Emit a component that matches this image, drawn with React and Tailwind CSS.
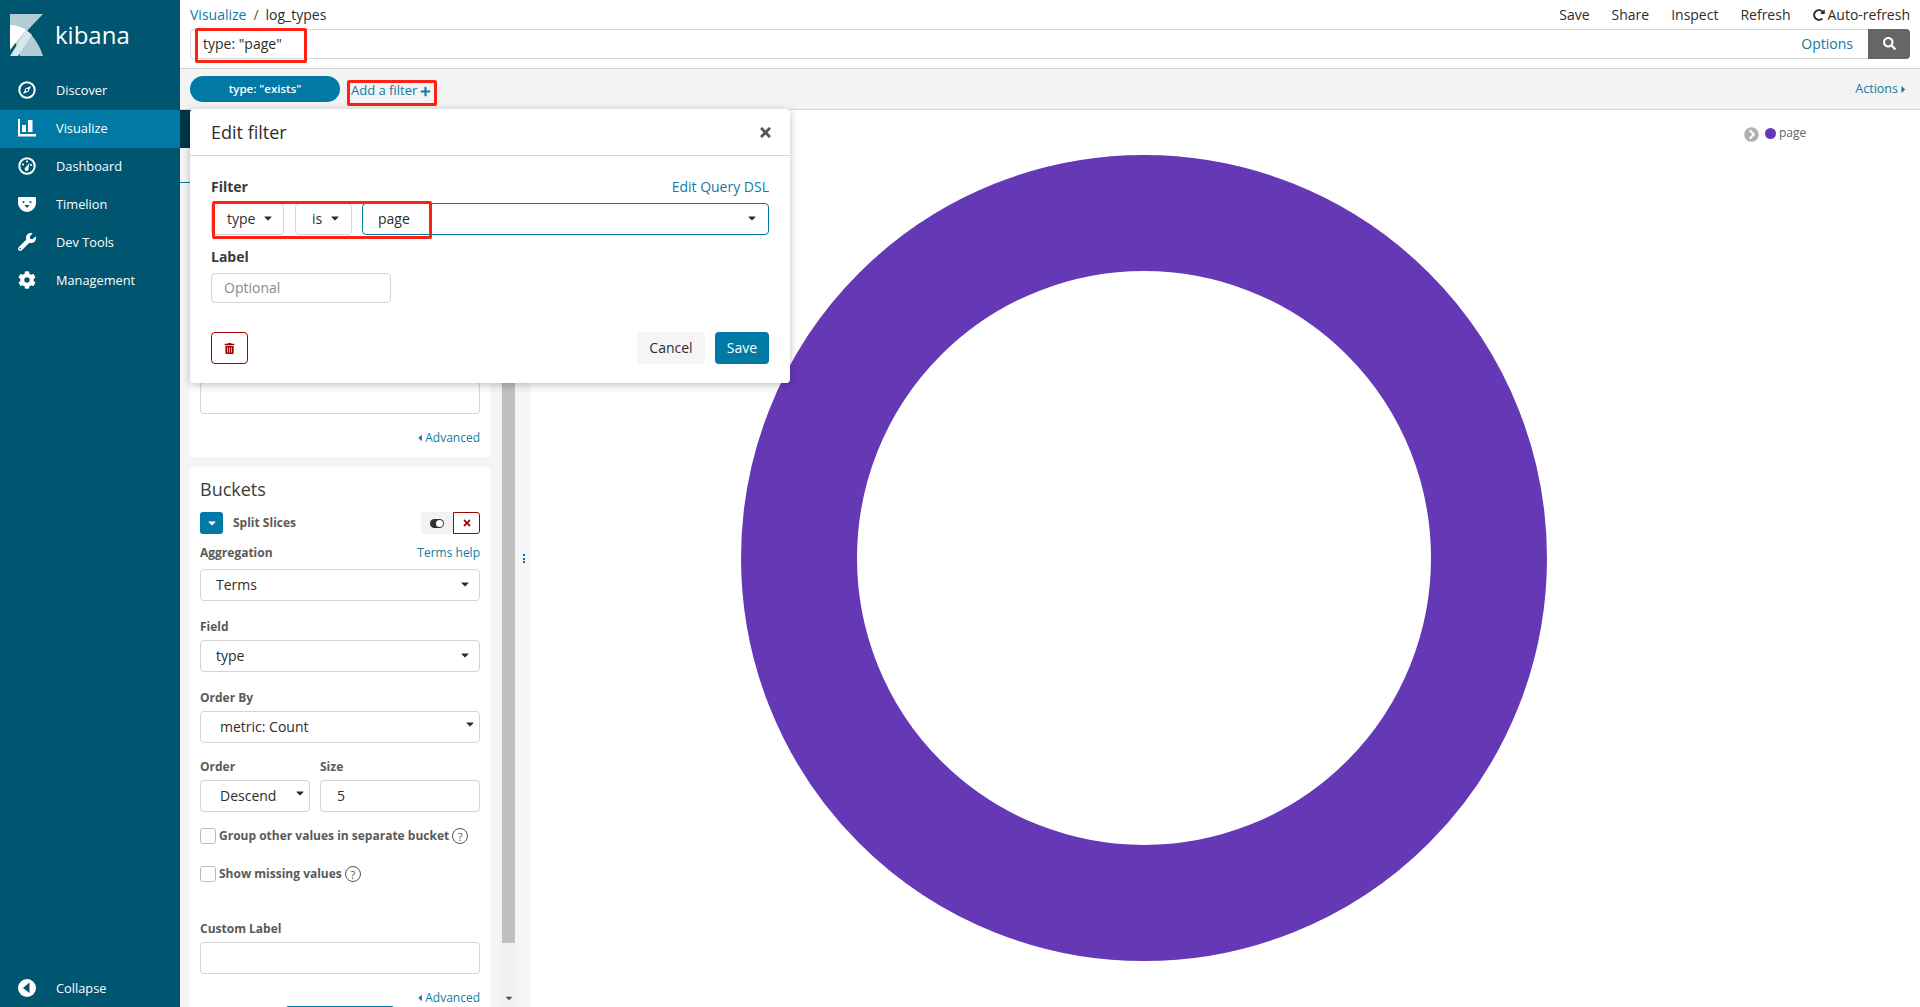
import React from 'react';
import { FaWrench, FaCog, FaSearch, FaPlus, FaTrashAlt, FaTimes, FaRedoAlt, FaChevronCircleRight, FaCaretDown, FaCaretLeft, FaCaretRight } from 'react-icons/fa';

const font = { fontFamily: '"Open Sans", sans-serif' };

const KibanaLogo = () => (
    <svg width="33" height="42" viewBox="0 0 33 42" className="block">
        <polygon points="0,0 33,0 15,19 0,11" fill="#b3cdd4" />
        <path d="M0 11 C12 11 25 19 33 42 L10 42 Z" fill="#b3cdd4" />
        <path d="M0 11 C6 11 12 13 16 16 L0 36 Z" fill="#ffffff" />
        <path d="M16 16 C18 17 20 19 22 21 L8 42 L0 42 Z" fill="#d9e6ea" />
    </svg>
);

const CompassIcon = () => (
    <svg width="18" height="18" viewBox="0 0 18 18">
        <circle cx="9" cy="9" r="7.7" fill="none" stroke="#fff" strokeWidth="2" />
        <path d="M13 5 L10.6 10.6 L5 13 L7.4 7.4 Z" fill="#fff" />
        <circle cx="9" cy="9" r="1.2" fill="#005571" />
    </svg>
);

const BarsIcon = () => (
    <svg width="18" height="18" viewBox="0 0 18 18">
        <path d="M0 0 H2 V15 H18 V17.5 H0 Z" fill="#fff" />
        <rect x="4" y="6" width="4" height="7" fill="#fff" />
        <rect x="10" y="1" width="4.5" height="12" fill="#fff" />
    </svg>
);

const GaugeIcon = () => (
    <svg width="18" height="18" viewBox="0 0 18 18">
        <circle cx="9" cy="9" r="7.7" fill="none" stroke="#fff" strokeWidth="2" />
        <circle cx="9" cy="4.5" r="1.1" fill="#fff" />
        <circle cx="13" cy="8" r="1.1" fill="#fff" />
        <circle cx="5" cy="7.5" r="1.1" fill="#fff" />
        <path d="M11.5 6 L10.5 11 A2 2 0 1 1 8 10 Z" fill="#fff" />
    </svg>
);

const BearIcon = () => (
    <svg width="18" height="15" viewBox="0 0 18 15">
        <path d="M0 1 C0 0 1 0 2 0 H16 C17 0 18 0 18 1 V6 C18 11 13 15 9 15 C5 15 0 11 0 6 Z" fill="#fff" />
        <circle cx="5.5" cy="5" r="1.1" fill="#005571" />
        <circle cx="12.5" cy="5" r="1.1" fill="#005571" />
        <path d="M6.5 8 H11.5 L9 11 Z" fill="#005571" />
    </svg>
);

const CollapseIcon = () => (
    <svg width="18" height="18" viewBox="0 0 18 18">
        <circle cx="9" cy="9" r="9" fill="#fff" />
        <path d="M11.5 3.5 V14 L5 9 Z" fill="#005571" />
    </svg>
);

const HelpIcon = () => (
    <span className="ml-[3px] inline-flex h-[16px] w-[16px] shrink-0 items-center justify-center rounded-full border border-[#555] text-[11px] font-normal leading-none text-[#555]">?</span>
);

const NavItem = ({ icon, label, active }) => (
    <div className={`flex h-[38px] items-center pl-[18px] text-[12.8px] text-white ${active ? 'bg-[#0079a5]' : ''}`}>
        <div className="-mt-[2px] flex w-[38px] items-center">{icon}</div>
        <span>{label}</span>
    </div>
);

const Label = ({ children, className = '' }) => (
    <div className={`text-[12px] font-bold leading-[14px] text-[#5a5a5a] ${className}`}>{children}</div>
);

const Box = ({ children, className = '', border = 'border-[#d4d4d4]' }) => (
    <div className={`flex h-[32px] items-center rounded-[4px] border bg-white pb-[2px] text-[14px] text-[#2d2d2d] ${border} ${className}`}>{children}</div>
);

const Advanced = () => (
    <div className="flex items-center justify-end text-[12px] leading-[14px] text-[#107ba3]">
        <FaCaretLeft className="text-[10px]" />
        <span>Advanced</span>
    </div>
);

const Caret = ({ className = '' }) => <FaCaretDown className={`text-[12px] text-[#2d2d2d] ${className}`} />;

const FilterPopup = () => (
    <div className="absolute left-[10px] -top-px z-20 h-[274px] w-[600px] rounded-[4px] bg-white text-[#2d2d2d] shadow-[0_2px_8px_rgba(0,0,0,0.25)]">
        <div className="flex h-[47px] items-center justify-between border-b border-[#d4d4d4] pl-[21px] pr-[17px]">
            <span className="text-[18px]">Edit filter</span>
            <FaTimes className="text-[15px] text-[#555]" />
        </div>
        <div className="px-[21px] pt-[22px]">
            <div className="flex items-center justify-between leading-[17px]">
                <span className="text-[14px] font-bold text-[#3a3a3a]">Filter</span>
                <span className="text-[14px] text-[#107ba3]">Edit Query DSL</span>
            </div>
            <div className="mt-[8px] flex">
                <Box className="w-[73px] justify-between pl-[15px] pr-[9px]"><span>type</span><Caret /></Box>
                <Box className="ml-[11px] w-[57px] justify-between pl-[16px] pr-[10px]"><span>is</span><Caret /></Box>
                <Box border="border-[#0079a5]" className="ml-[10px] flex-1 justify-between pl-[15px] pr-[10px]"><span>page</span><Caret /></Box>
            </div>
            <div className="mt-[13px] text-[14px] font-bold leading-[17px] text-[#3a3a3a]">Label</div>
            <div className="mt-[8px] flex h-[30px] w-[180px] items-center rounded-[4px] border border-[#d4d4d4] pb-[2px] pl-[12px] text-[14px] text-[#8a8a8a]">Optional</div>
            <div className="mt-[29px] flex items-center justify-between">
                <div className="flex h-[32px] w-[37px] items-center justify-center rounded-[4px] border border-[#a30000] text-[#a30000]">
                    <FaTrashAlt className="text-[11px]" />
                </div>
                <div className="flex gap-[10px] text-[14px]">
                    <div className="flex h-[32px] w-[68px] items-center justify-center rounded-[4px] bg-[#f5f5f5] pb-[2px]">Cancel</div>
                    <div className="flex h-[32px] w-[54px] items-center justify-center rounded-[4px] bg-[#0079a5] pb-[2px] text-white">Save</div>
                </div>
            </div>
        </div>
        <div className="pointer-events-none absolute left-[22px] top-[92px] h-[38px] w-[220px] rounded-[2px] border-[3px] border-[#fe2216]" />
    </div>
);

const EditorPanel = () => (
    <div className="relative flex w-[350px] shrink-0 overflow-hidden bg-[#f5f5f5]">
        <div className="w-[320px] shrink-0">
            <div className="h-[38px] bg-[#00364a]" />
            <div className="h-[35px] border-b border-[#0079a5]" />
            <div className="ml-[10px] w-[300px]">
                <div className="mt-[9px] h-[265px] rounded-[4px] bg-white px-[10px]">
                    <div className="h-[190px]" />
                    <Box className="h-[32px]" />
                    <div className="mt-[17px]"><Advanced /></div>
                </div>
                <div className="mt-[10px] rounded-[4px] bg-white px-[10px]">
                    <div className="pt-[11px] text-[18px] leading-[22px] text-[#3b3b3b]">Buckets</div>
                    <div className="mt-[12px] flex h-[22px] items-center justify-between">
                        <div className="flex items-center">
                            <div className="flex h-[22px] w-[23px] items-center justify-center rounded-[3px] bg-[#0079a5] text-white">
                                <FaCaretDown className="text-[12px]" />
                            </div>
                            <span className="ml-[10px] text-[12px] font-bold text-[#5a5a5a]">Split Slices</span>
                        </div>
                        <div className="flex">
                            <div className="flex h-[22px] w-[32px] items-center justify-center rounded-l-[3px] bg-[#f2f2f2]">
                                <span className="flex h-[9px] w-[14px] items-center justify-start rounded-full bg-[#333]">
                                    <span className="ml-auto mr-[1px] h-[7px] w-[7px] rounded-full bg-white" />
                                </span>
                            </div>
                            <div className="flex h-[22px] w-[27px] items-center justify-center rounded-r-[3px] border border-[#a30000] text-[#a30000]">
                                <FaTimes className="text-[10px]" />
                            </div>
                        </div>
                    </div>
                    <div className="mt-[12px] flex justify-between leading-[14px]">
                        <Label>Aggregation</Label>
                        <span className="text-[12px] text-[#107ba3]">Terms help</span>
                    </div>
                    <Box className="mt-[9px] justify-between pl-[15px] pr-[8px]"><span>Terms</span><Caret /></Box>
                    <Label className="mt-[19px]">Field</Label>
                    <Box className="mt-[6px] justify-between pl-[15px] pr-[8px]"><span>type</span><Caret /></Box>
                    <Label className="mt-[19px]">Order By</Label>
                    <Box className="mt-[6px] justify-between pl-[19px] pr-[3px]"><span>metric: Count</span><Caret className="-mt-[4px]" /></Box>
                    <div className="mt-[17px] flex gap-[10px]">
                        <div className="w-[110px]">
                            <Label>Order</Label>
                            <Box className="mt-[6px] justify-between pl-[19px] pr-[3px]"><span>Descend</span><Caret className="-mt-[4px]" /></Box>
                        </div>
                        <div className="flex-1">
                            <Label>Size</Label>
                            <Box className="mt-[6px] pl-[16px]"><span>5</span></Box>
                        </div>
                    </div>
                    <div className="mt-[16px] flex h-[16px] items-center">
                        <span className="h-[16px] w-[16px] rounded-[3px] border border-[#bbb]" />
                        <Label className="ml-[3px]">Group other values in separate bucket</Label>
                        <HelpIcon />
                    </div>
                    <div className="mt-[22px] flex h-[16px] items-center">
                        <span className="h-[16px] w-[16px] rounded-[3px] border border-[#bbb]" />
                        <Label className="ml-[3px]">Show missing values</Label>
                        <HelpIcon />
                    </div>
                    <Label className="mt-[40px]">Custom Label</Label>
                    <Box className="mt-[6px]" />
                    <div className="mt-[17px]"><Advanced /></div>
                    <div className="mx-auto mt-[1px] h-[30px] w-[110px] rounded-t-[4px] border-t-2 border-[#0079a5]" />
                </div>
            </div>
        </div>
        <div className="relative w-[15px] shrink-0 bg-[#f1f1f1]">
            <div className="ml-[2px] mt-[72px] h-[761px] w-[13px] bg-[#bfbfbf]" />
            <FaCaretDown className="absolute bottom-[4px] left-[4px] text-[10px] text-[#505050]" />
        </div>
        <div className="flex flex-1 items-center justify-center pl-[2px]">
            <div className="flex flex-col gap-[1.5px]">
                <span className="h-[2px] w-[2px] bg-[#0079a5]" />
                <span className="h-[2px] w-[2px] bg-[#0079a5]" />
                <span className="h-[2px] w-[2px] bg-[#0079a5]" />
            </div>
        </div>
    </div>
);

const ChartArea = () => (
    <div className="relative flex-1 bg-white">
        <svg width="1390" height="897" viewBox="0 0 1390 897" className="block">
            <circle cx="614" cy="448" r="345" fill="none" stroke="#6538b6" strokeWidth="116" />
        </svg>
        <div className="absolute left-[1214px] top-[14px] flex items-center text-[12px] leading-[14px] text-[#666]">
            <FaChevronCircleRight className="mt-[3px] text-[15px] text-[#b0b0b0]" />
            <span className="ml-[6px] h-[11px] w-[11px] rounded-full bg-[#6538b6]" />
            <span className="ml-[3px]">page</span>
        </div>
    </div>
);

export default function App() {
    return (
        <div className="flex h-screen w-full overflow-hidden bg-white" style={font}>
            <aside className="flex w-[180px] shrink-0 flex-col bg-[#005571]">
                <div className="flex h-[72px] pl-[10px] pt-[14px]">
                    <KibanaLogo />
                    <span className="ml-[12px] mt-[1px] text-[24px] font-medium leading-[40px] text-white">kibana</span>
                </div>
                <NavItem icon={<CompassIcon />} label="Discover" />
                <NavItem icon={<BarsIcon />} label="Visualize" active />
                <NavItem icon={<GaugeIcon />} label="Dashboard" />
                <NavItem icon={<BearIcon />} label="Timelion" />
                <NavItem icon={<FaWrench className="text-[18px] text-white" />} label="Dev Tools" />
                <NavItem icon={<FaCog className="text-[18px] text-white" />} label="Management" />
                <div className="mt-auto -mb-px">
                    <NavItem icon={<CollapseIcon />} label="Collapse" />
                </div>
            </aside>

            <main className="flex min-w-0 flex-1 flex-col">
                <div className="h-[69px] shrink-0 border-b border-[#d4d4d4] px-[10px]">
                    <div className="flex h-[29px] items-center justify-between text-[14px] text-[#2d2d2d]">
                        <div className="flex">
                            <span className="text-[#107ba3]">Visualize</span>
                            <span className="mx-[7px] text-[#555]">/</span>
                            <span>log_types</span>
                        </div>
                        <div className="flex items-center gap-[22px]">
                            <span>Save</span>
                            <span>Share</span>
                            <span>Inspect</span>
                            <span>Refresh</span>
                            <span className="flex items-center">
                                <FaRedoAlt className="mr-[3px] text-[12px]" />Auto-refresh
                            </span>
                        </div>
                    </div>
                    <div className="relative flex h-[30px] items-center rounded-[4px] border border-[#d9d9d9] bg-white pb-[1px] pl-[12px] text-[14px]">
                        <span className="text-[#2d2d2d]">type: "page"</span>
                        <span className="ml-auto mr-[15px] text-[#107ba3]">Options</span>
                        <div className="-my-px -mr-px flex h-[30px] w-[42px] items-center justify-center rounded-r-[4px] bg-[#666] text-white">
                            <FaSearch className="text-[13px]" />
                        </div>
                        <div className="absolute -top-[2px] left-[4px] h-[35px] w-[112px] rounded-[2px] border-[3px] border-[#fe2216]" />
                    </div>
                </div>

                <div className="flex h-[41px] shrink-0 items-center justify-between border-b border-[#d4d4d4] bg-[#f3f3f3] pl-[10px] pr-[11px]">
                    <div className="flex items-center">
                        <div className="flex h-[26px] w-[150px] items-center justify-center rounded-full bg-[#0079a5] text-[11.5px] font-semibold text-white">type: "exists"</div>
                        <div className="relative ml-[11px] mt-[4px] flex items-center text-[13px] text-[#107ba3]">
                            <span>Add a filter</span>
                            <FaPlus className="ml-[3px] text-[11px]" />
                            <div className="absolute -bottom-[5px] -left-[4px] -right-[6px] -top-[1px] rounded-[2px] border-[3px] border-[#fe2216]" />
                        </div>
                    </div>
                    <div className="flex items-center text-[12.5px] text-[#107ba3]">
                        Actions<FaCaretRight className="text-[11px]" />
                    </div>
                </div>

                <div className="relative flex min-h-0 flex-1">
                    <EditorPanel />
                    <ChartArea />
                    <FilterPopup />
                </div>
            </main>
        </div>
    );
}
